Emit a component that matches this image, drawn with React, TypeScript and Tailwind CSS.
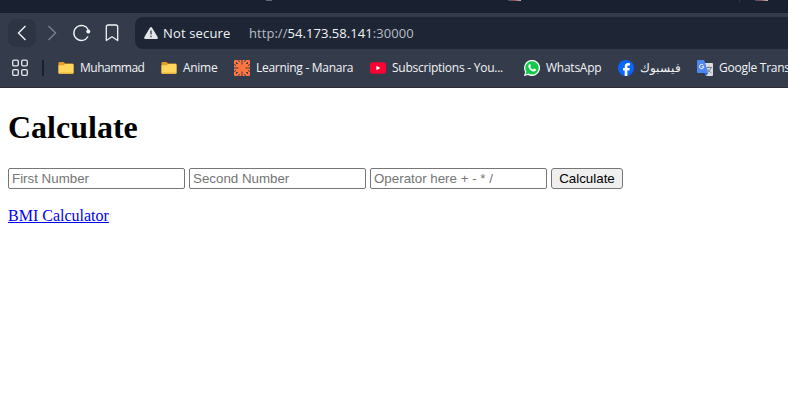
import type { ReactNode } from "react";

function FolderIcon() {
  return (
    <svg width="16" height="16" viewBox="0 0 16 16">
      <path d="M0.5 3a1 1 0 0 1 1-1h4L7 3.500h7.500a1 1 0 0 1 1 1V13h-15z" fill="#e09f1c" />
      <path d="M0.500 5.200h5L7 4h7.500a1 1 0 0 1 1 1v7.800a1 1 0 0 1-1 1h-13a1 1 0 0 1-1-1z" fill="#ffd65c" />
      <path d="M0.500 12.500h15v.3a1 1 0 0 1-1 1h-13a1 1 0 0 1-1-1z" fill="#e9b640" />
    </svg>
  );
}

function ManaraIcon() {
  return (
    <svg width="16" height="16" viewBox="0 0 16 16">
      <rect width="16" height="16" rx="1" fill="#ff7540" />
      <g fill="#3e404b">
        <path d="M7.500 0h1v4.500h-1zM7.500 11.500h1V16h-1zM0 7.500h4.500v1H0zM11.500 7.500H16v1h-4.500z" />
        <path d="M2 2h1v1h1v1H2zM13 2h1v2h-2V3h1zM2 12h2v1H3v1H2zM12 12h2v2h-1v-1h-1z" />
        <path d="M4 0h1l1 2H5zM11 0h1l-1 2h-1zM5 14h1l-1 2H4zM10 14h1l1 2h-1zM0 4l2 1v1L0 5zM0 11l2-1v1l-2 1zM14 5l2-1v1l-2 1zM14 10l2 1v1l-2-1z" />
      </g>
    </svg>
  );
}

function YoutubeIcon() {
  return (
    <svg width="16" height="16" viewBox="0 0 16 16">
      <rect y="2.300" width="16" height="11.400" rx="2.800" fill="#ff0033" />
      <path d="M6.400 5.800v4.400L10.400 8z" fill="#fff" />
    </svg>
  );
}

function WhatsappIcon() {
  return (
    <svg width="16" height="16" viewBox="0 0 16 16">
      <path d="M0 16l1.100-4.100A8 8 0 1 1 4.100 14.900z" fill="#fff" />
      <path d="M1.600 14.400l.8-2.800A6.700 6.700 0 1 1 4.500 13.600z" fill="#13c94b" />
      <path d="M5.400 4.200c.4-.2.8 0 .9.3l.6 1.300c.1.4-.5.9-.6 1.100.7 1.300 1.600 2.100 2.900 2.600.3-.2.7-1 1.100-.9l1.400.7c.4.2.3 1-.1 1.500-.6.7-1.700.9-2.600.6C6.700 10.800 5.300 9.400 4.500 7.300c-.4-1.200 0-2.500.9-3.100z" fill="#fff" />
    </svg>
  );
}

function FacebookIcon() {
  return (
    <svg width="16" height="16" viewBox="0 0 16 16">
      <circle cx="8" cy="8" r="8" fill="#0866ff" />
      <path d="M6.700 15.900v-5.400H5V8h1.700V6.900c0-2.600 1.200-3.800 3.700-3.800.5 0 1.200.1 1.500.2v2.200c-2-.1-2.500.1-2.500 1.600V8h2.400l-.4 2.500h-2v5.300a8 8 0 0 1-2.700.1z" fill="#fff" />
    </svg>
  );
}

function TranslateIcon() {
  return (
    <svg width="16" height="16" viewBox="0 0 16 16">
      <path d="M6 3h9a1 1 0 0 1 1 1v11a1 1 0 0 1-1 1H9z" fill="#dcdcdc" />
      <path d="M9.500 7.500h5.500M12 6.300v1.200M14 7.500c-.4 2.200-2 4-3.800 5M10.700 9c.8 1.700 2 3 3.700 3.700" stroke="#687c86" fill="none" strokeWidth=".9" />
      <path d="M1 0h5.500a1 1 0 0 1 1 .7L11.300 13H1a1 1 0 0 1-1-1V1a1 1 0 0 1 1-1z" fill="#4d88ee" />
      <path d="M7.500 13h3.800L9 16z" fill="#3367d6" />
      <path d="M6.400 5.100A2.200 2.200 0 1 0 6.900 6.800H4.800" stroke="#fff" fill="none" />
    </svg>
  );
}

type BookmarkProps = { icon: ReactNode; label: string; className: string; labelClassName?: string };

function Bookmark({ icon, label, className, labelClassName = "" }: BookmarkProps) {
  return (
    <div className={`flex h-4 shrink-0 items-center gap-1.5 ${className}`}>
      <span className="shrink-0">{icon}</span>
      <span className={`whitespace-nowrap ${labelClassName}`}>{label}</span>
    </div>
  );
}

function BrowserChrome() {
  return (
    <header className="h-[88px] overflow-hidden border-b border-[#2c2c32] bg-[#343c4c] font-['Open_Sans','Noto_Sans',sans-serif] text-[#f2f3f5]">
      <div className="flex h-[13px] items-start bg-[#192130]">
        <span className="ml-[266px] h-px w-1.5 bg-[#626975]" />
        <span className="ml-[236px] h-px w-[13px] bg-gradient-to-r from-[#295b65] via-[#994c56] to-[#b9bdc1]" />
        <span className="ml-[218px] h-0.5 w-px bg-[#343c4c]" />
        <span className="ml-[15px] h-px w-[13px] bg-gradient-to-r from-[#295b65] via-[#994c56] to-[#b9bdc1]" />
      </div>
      <nav className="flex h-10 items-center pl-2">
        <button aria-label="Back" className="flex size-7 items-center justify-center rounded-lg bg-[#2d3443]">
          <svg width="28" height="28" viewBox="0 0 28 28" fill="none" stroke="#f2f3f5" strokeWidth="1.400"><path d="M17.500 7l-7 7 7 7" /></svg>
        </button>
        <button aria-label="Forward" className="ml-0.5 size-7">
          <svg width="28" height="28" viewBox="0 0 28 28" fill="none" stroke="#7b818d" strokeWidth="1.400"><path d="M10.500 7l7 7-7 7" /></svg>
        </button>
        <button aria-label="Reload" className="ml-0.5 size-7">
          <svg width="28" height="28" viewBox="0 0 28 28" fill="none" stroke="#f2f3f5" strokeWidth="1.400"><path d="M20 17.500A7.500 7.500 0 1 1 20.200 10.800" /><circle cx="20.300" cy="12.400" r="2" fill="#f2f3f5" stroke="none" /></svg>
        </button>
        <button aria-label="Bookmark" className="ml-0.5 size-7">
          <svg width="28" height="28" viewBox="0 0 28 28" fill="none" stroke="#f2f3f5" strokeWidth="1.300" strokeLinejoin="round"><path d="M8.300 8a2 2 0 0 1 2-2h7.400a2 2 0 0 1 2 2v13.500L14 17.800l-5.700 3.700z" /></svg>
        </button>
        <div className="ml-[9px] flex h-8 flex-1 items-center rounded-l-lg bg-[#1e2635] pl-[9px] text-[13px]">
          <svg width="14" height="12" viewBox="0 0 14 12">
            <path d="M5.900.7a1.300 1.300 0 0 1 2.200 0l5.500 9.300c.5.900 0 2-1.100 2h-11C.4 12 0 10.900.4 10z" fill="#e3e5e8" />
            <path d="M7 3.500v4M7 8.800v1.500" stroke="#424957" strokeWidth="1.400" />
          </svg>
          <span className="ml-[5px] w-[86px] whitespace-nowrap pt-px tracking-[0.15px]">Not secure</span>
          <span className="whitespace-nowrap pt-px tracking-[0.05px] text-[#b8bdc5]">http://<span className="text-[#f2f3f5]">54.173.58.141</span>:30000</span>
        </div>
      </nav>
      <div className="flex h-[30px] items-center pl-3 text-[12px]">
        <svg className="shrink-0" width="16" height="18" viewBox="0 0 16 18" fill="none" stroke="#e7e9ec" strokeWidth="1.300">
          <rect x=".7" y="1.200" width="5.600" height="5.600" rx="1.300" /><rect x="9.700" y="1.200" width="5.600" height="5.600" rx="1.300" />
          <rect x=".7" y="10.700" width="5.600" height="5.600" rx="1.300" /><rect x="9.700" y="10.700" width="5.600" height="5.600" rx="1.300" />
        </svg>
        <span className="ml-3.5 mr-3.5 h-4 w-0.5 shrink-0 bg-[#1a2232]" />
        <Bookmark className="w-[103px]" icon={<FolderIcon />} label="Muhammad" labelClassName="tracking-[-0.5px]" />
        <Bookmark className="w-[73px]" icon={<FolderIcon />} label="Anime" labelClassName="tracking-[-0.3px]" />
        <Bookmark className="w-[136px]" icon={<ManaraIcon />} label="Learning - Manara" labelClassName="tracking-[-0.28px]" />
        <Bookmark className="w-[154px]" icon={<YoutubeIcon />} label="Subscriptions - You..." labelClassName="tracking-[-0.25px]" />
        <Bookmark className="w-[94px]" icon={<WhatsappIcon />} label="WhatsApp" labelClassName="tracking-[-0.25px]" />
        <Bookmark className="w-[79px]" icon={<FacebookIcon />} label="فيسبوك" />
        <Bookmark className="w-[91px]" icon={<TranslateIcon />} label="Google Trans" labelClassName="tracking-[-0.25px]" />
      </div>
    </header>
  );
}

const inputClass = "h-[21px] w-[177px] rounded-[2px] border border-[#767676] bg-white px-[3px] font-['Liberation_Sans',Arial,sans-serif] text-[13.333px] placeholder:text-[#757575]";

export default function App() {
  return (
    <div className="h-[403px] w-[788px] overflow-hidden bg-white">
      <BrowserChrome />
      <main className="px-2 pt-[21px] font-['Liberation_Serif','Times_New_Roman',serif] text-black">
        <h1 className="text-[32px] font-bold leading-[37px]">Calculate</h1>
        <form className="mt-[22px] flex gap-1">
          <input className={inputClass} placeholder="First Number" />
          <input className={inputClass} placeholder="Second Number" />
          <input className={inputClass} placeholder="Operator here + - * /" />
          <button type="button" className="h-[21px] w-[72px] rounded-[3px] border border-[#767676] bg-[#efefef] font-['Liberation_Sans',Arial,sans-serif] text-[13.333px] leading-[19px]">Calculate</button>
        </form>
        <a href="#" className="mt-[18px] block w-fit text-[16px] leading-[18px] text-[#0000ee] underline">BMI Calculator</a>
      </main>
    </div>
  );
}
